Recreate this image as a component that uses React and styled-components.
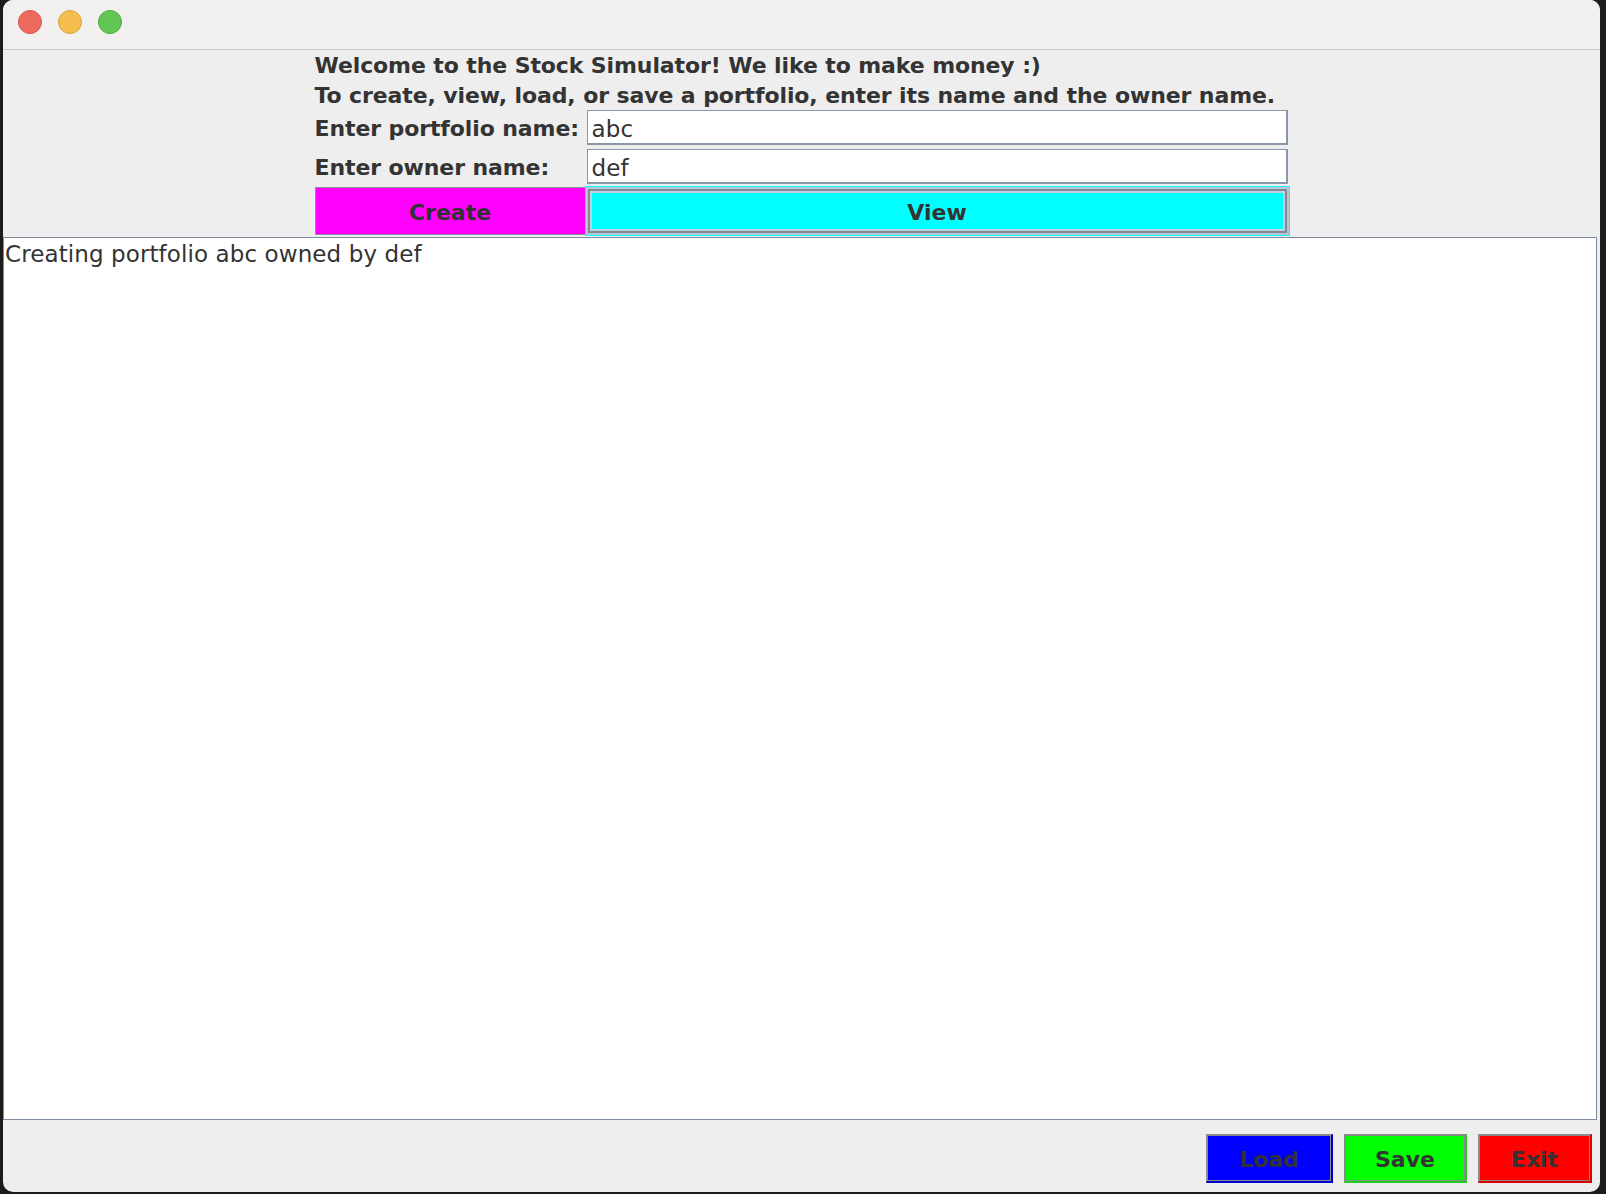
import React from "react";
import styled, { createGlobalStyle } from "styled-components";

const Global = createGlobalStyle`
  html, body { margin: 0; padding: 0; background: #1c1c1c; }
  body { width: 1606px; height: 1194px; overflow: hidden; font-family: "DejaVu Sans", sans-serif; }
`;

const Desktop = styled.div`
  display: flex;
  width: 1606px;
  height: 1194px;
  padding-left: 3px;
  box-sizing: border-box;
`;

const Window = styled.div`
  width: 1597px;
  height: 1192px;
  background: #eeeeee;
  border-radius: 10px;
  overflow: hidden;
  display: flex;
  flex-direction: column;
`;

const TitleBar = styled.div`
  height: 50px;
  flex: none;
  background: #f1f0ef;
  border-bottom: 1px solid #cbcbcb;
  display: flex;
  align-items: center;
  gap: 16px;
  padding-left: 15px;
  box-sizing: border-box;
  padding-bottom: 5px;
`;

const Light = styled.span`
  width: 24px;
  height: 24px;
  border-radius: 50%;
  background: ${p => p.$c};
  border: 1px solid ${p => p.$b};
  box-sizing: border-box;
`;

const Top = styled.div`
  width: 974px;
  margin: 0 auto;
  display: flex;
  flex-direction: column;
`;

const Heading = styled.div`
  font-weight: bold;
  font-size: 22px;
  color: #333333;
  height: ${p => p.$h}px;
  box-sizing: border-box;
  padding-top: 1px;
  line-height: 30px;
  white-space: nowrap;
  letter-spacing: -0.1px;
`;

const FieldRow = styled.div`
  display: flex;
  align-items: center;
  height: 37px;
  margin-top: ${p => p.$mt || 0}px;
`;

const Label = styled.div`
  width: 272px;
  flex: none;
  font-weight: bold;
  font-size: 22px;
  color: #333333;
  white-space: nowrap;
  letter-spacing: -0.1px;
  padding-top: 1px;
`;

const Field = styled.div`
  flex: 1;
  height: 35px;
  box-sizing: border-box;
  background: #ffffff;
  border: 1px solid #8797a7;
  border-right-width: 2px;
  border-bottom-width: 2px;
  font-size: 23px;
  color: #333333;
  padding: 3px 0 0 4px;
  display: flex;
  align-items: center;
  margin-right: 1px;
  letter-spacing: 0.1px;
`;

const ButtonRow = styled.div`
  display: flex;
  height: 48px;
  margin-top: 2px;
`;

const TopButton = styled.div`
  box-sizing: border-box;
  width: ${p => p.$w}px;
  flex: ${p => (p.$w ? "none" : "1")};
  background: ${p => p.$bg};
  border: ${p => (p.$focus ? "2px solid #b9c5d1" : "1px solid #8c8ca0")};
  box-shadow: ${p => (p.$focus ? "inset 0 0 0 2px #7b8b9b, inset 0 0 0 4px #c5d0dc" : "none")};
  outline: ${p => (p.$focus ? "1px solid #00ffff" : "none")};
  display: flex;
  align-items: center;
  justify-content: center;
  font-weight: bold;
  font-size: 22px;
  color: #333333;
  padding-top: 2px;
`;

const Output = styled.div`
  flex: 1;
  margin: 2px 3px 0 0;
  background: #ffffff;
  border: 1px solid #7d8d9d;
  font-size: 23px;
  color: #333333;
  padding: 3px 0 0 1px;
  line-height: 27px;
  letter-spacing: 0.1px;
`;

const Footer = styled.div`
  height: 72px;
  flex: none;
  display: flex;
  justify-content: flex-end;
  align-items: flex-start;
  gap: 11px;
  padding: 14px 8px 0 0;
  box-sizing: border-box;
`;

const BottomButton = styled.div`
  width: ${p => p.$w}px;
  height: 49px;
  box-sizing: border-box;
  background: ${p => p.$bg};
  border: 1px solid #8a8a8a;
  border-right: 2px solid ${p => p.$edge};
  border-bottom: 2px solid ${p => p.$edge};
  box-shadow: inset -1px -1px 0 #8a8a8a, inset 1px 1px 0 #8a8a8a;
  display: flex;
  align-items: center;
  justify-content: center;
  font-weight: bold;
  font-size: 22px;
  color: #333333;
  padding-top: 3px;
`;

export default function App() {
  return (
    <>
      <Global />
      <Desktop>
        <Window>
          <TitleBar>
            <Light $c="#ee6a5f" $b="#d5564c" />
            <Light $c="#f5be4f" $b="#d9a23b" />
            <Light $c="#62c655" $b="#4ea943" />
          </TitleBar>
          <Top>
            <Heading $h={30}>Welcome to the Stock Simulator! We like to make money :)</Heading>
            <Heading $h={29}>To create, view, load, or save a portfolio, enter its name and the owner name.</Heading>
            <FieldRow>
              <Label>Enter portfolio name:</Label>
              <Field>abc</Field>
            </FieldRow>
            <FieldRow $mt={2}>
              <Label>Enter owner name:</Label>
              <Field>def</Field>
            </FieldRow>
            <ButtonRow>
              <TopButton $w={271} $bg="#ff00ff">Create</TopButton>
              <TopButton $bg="#00ffff" $focus>View</TopButton>
            </ButtonRow>
          </Top>
          <Output>Creating portfolio abc owned by def</Output>
          <Footer>
            <BottomButton $w={127} $bg="#0000ff" $edge="#0000cc">Load</BottomButton>
            <BottomButton $w={123} $bg="#00ff00" $edge="#22cc22">Save</BottomButton>
            <BottomButton $w={114} $bg="#ff0000" $edge="#dd0000">Exit</BottomButton>
          </Footer>
        </Window>
      </Desktop>
    </>
  );
}
